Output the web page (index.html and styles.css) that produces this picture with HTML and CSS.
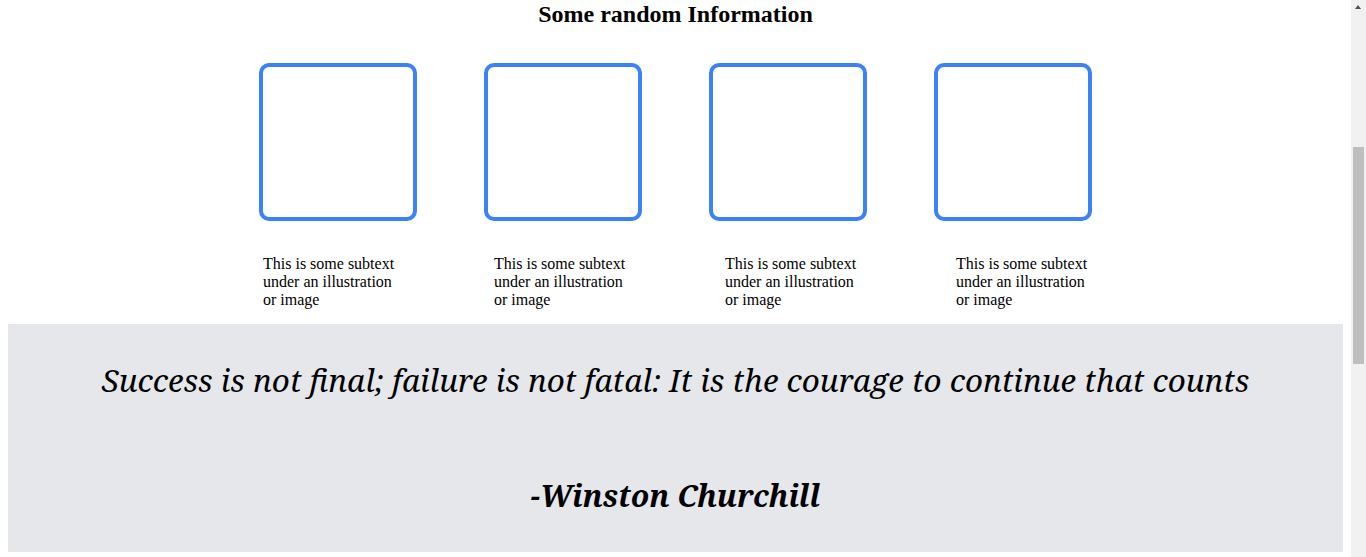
FILE: index.html
```html
<!DOCTYPE html>
<html lang="en">
<head>
<meta charset="utf-8">
<title>Some random Information</title>
<link rel="stylesheet" href="styles.css">
</head>
<body>
<section class="info">
  <h2 class="info-title">Some random Information</h2>
  <div class="cards">
    <div class="card"></div>
    <div class="card"></div>
    <div class="card"></div>
    <div class="card"></div>
  </div>
  <div class="captions">
    <p class="caption">This is some subtext under an illustration or image</p>
    <p class="caption">This is some subtext under an illustration or image</p>
    <p class="caption">This is some subtext under an illustration or image</p>
    <p class="caption">This is some subtext under an illustration or image</p>
  </div>
</section>
<section class="quote">
  <p class="quote-text">Success is not final; failure is not fatal: It is the courage to continue that counts</p>
  <p class="quote-author">-Winston Churchill</p>
</section>
<div class="scrollbar" aria-hidden="true">
  <span class="scrollbar-arrow"></span>
  <span class="scrollbar-thumb"></span>
</div>
</body>
</html>
```

FILE: styles.css
```css
html, body {
  background: #ffffff;
}
body {
  margin: 0 23px 5px 8px;
  font-family: "Liberation Serif", "Times New Roman", serif;
  color: #000000;
}
.info {
  display: flex;
  flex-direction: column;
  align-items: center;
}
.info-title {
  margin: 0;
  font-size: 24px;
  line-height: 28px;
  font-weight: bold;
  text-align: center;
}
.cards {
  display: flex;
  justify-content: center;
  gap: 67px;
  margin-top: 35px;
}
.card {
  box-sizing: border-box;
  width: 158px;
  height: 158px;
  border: 4px solid #3b82f6;
  border-radius: 10px;
}
.captions {
  display: flex;
  justify-content: center;
  gap: 91px;
  margin-top: 34px;
  margin-bottom: 15px;
}
.caption {
  box-sizing: border-box;
  width: 140px;
  margin: 0;
  padding-left: 4px;
  font-size: 16px;
  line-height: normal;
}
.quote {
  background: #e5e7eb;
  padding: 34px 0 36px;
  text-align: center;
  font-family: "Noto Serif", "DejaVu Serif", serif;
  font-style: italic;
}
.quote-text {
  margin: 0;
  font-size: 31.4px;
  line-height: normal;
}
.quote-author {
  margin: 74px 0 0;
  font-size: 30px;
  line-height: normal;
  font-weight: bold;
}
.scrollbar {
  position: fixed;
  top: 0;
  right: 0;
  bottom: 0;
  width: 15px;
  background: #f1f1f1;
}
.scrollbar-arrow {
  position: absolute;
  top: 5px;
  left: 4px;
  width: 0;
  height: 0;
  border-left: 3.5px solid transparent;
  border-right: 3.5px solid transparent;
  border-bottom: 4px solid #505050;
}
.scrollbar-thumb {
  position: absolute;
  top: 147px;
  left: 2px;
  width: 11px;
  height: 217px;
  background: #bebebe;
}
```
